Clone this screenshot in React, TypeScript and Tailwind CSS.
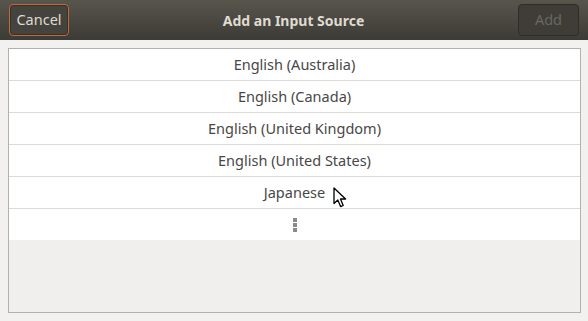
import React from "react";

const sources = [
  "English (Australia)",
  "English (Canada)",
  "English (United Kingdom)",
  "English (United States)",
  "Japanese",
];

function Cursor() {
  return (
    <svg
      width="16"
      height="22"
      viewBox="0 0 16 22"
      className="absolute left-[333px] top-[187px]"
    >
      <path
        d="M1 1 L1 16.5 L4.8 13 L7.6 19.6 L10.2 18.5 L7.5 12 L12.6 12 Z"
        fill="#ffffff"
        stroke="#000000"
        strokeWidth="1.3"
        strokeLinejoin="round"
      />
    </svg>
  );
}

export default function App() {
  return (
    <div
      className="relative h-[321px] w-[588px] overflow-hidden bg-[#f2f1f0]"
      style={{ fontFamily: '"Noto Sans", "Open Sans", sans-serif' }}
    >
      {/* header bar */}
      <div className="flex h-[40px] items-center justify-between bg-gradient-to-b from-[#58554d] to-[#3d3b36] px-[9px]">
        <button className="flex h-[32px] w-[60px] items-center justify-center rounded-[4px] border border-[#c06a3c] bg-[#45433d] text-[14.5px] text-[#dfdbd2] shadow-[inset_0_0_0_1px_rgba(0,0,0,0.25)]">
          Cancel
        </button>
        <div className="text-[14px] font-bold text-[#dfdbd2]">
          Add an Input Source
        </div>
        <button className="flex h-[32px] w-[61px] items-center justify-center rounded-[4px] border border-[#2e2d29] bg-[#3f3d38] text-[14.5px] text-[#6a675f]">
          Add
        </button>
      </div>

      {/* list panel */}
      <div className="ml-[8px] mt-[8px] flex h-[265px] w-[573px] flex-col border border-[#b3b1ad] bg-[#f0efee]">
        {sources.map((s) => (
          <div
            key={s}
            className="flex h-[32px] items-center justify-center border-b border-[#dcdbd8] bg-white text-[14.5px] text-[#474747]"
          >
            {s}
          </div>
        ))}
        <div className="flex h-[31px] items-center justify-center bg-white">
          <div className="flex flex-col gap-[1px]">
            <span className="block h-[4px] w-[4px] bg-[#8a8a88]" />
            <span className="block h-[4px] w-[4px] bg-[#8a8a88]" />
            <span className="block h-[4px] w-[4px] bg-[#8a8a88]" />
          </div>
        </div>
      </div>

      <Cursor />
    </div>
  );
}
